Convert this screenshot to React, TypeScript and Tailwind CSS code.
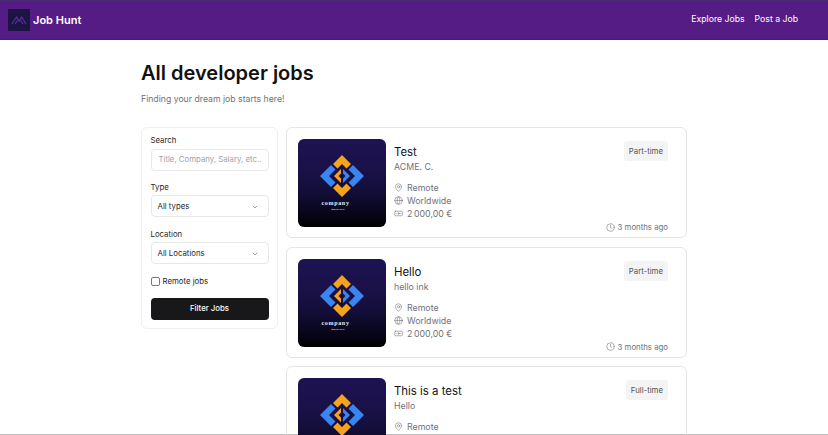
import { ChevronDown, Clock, Globe, MapPin, Banknote } from "lucide-react";

function CompanyLogo() {
  return (
    <div className="relative z-10 w-[88px] h-[88px] shrink-0 rounded-md overflow-hidden bg-[linear-gradient(180deg,#1c1352_0%,#1a1149_35%,#130e38_60%,#0a0720_80%,#000_100%)]">
      <svg viewBox="0 0 88 88" className="w-[88px] h-[88px]">
        <path d="M44 16 L53 25 L48.5 29.5 L44 25 L39.5 29.5 L35 25Z" fill="#f5a31c" />
        <path d="M44 58 L53 49 L48.5 44.5 L44 49 L39.5 44.5 L35 49Z" fill="#f5a31c" />
        <path d="M33 26 L37.5 30.5 L31 37 L37.5 43.5 L33 48 L22 37Z" fill="#3a86f0" />
        <path d="M55 26 L50.5 30.5 L57 37 L50.5 43.5 L55 48 L66 37Z" fill="#3a86f0" />
        <path d="M43 30 L43 34.5 L40.5 37 L43 39.5 L43 44 L36 37Z" fill="#f5a31c" />
        <path d="M45 30 L45 34.5 L47.5 37 L45 39.5 L45 44 L52 37Z" fill="#3a86f0" />
        <text x="37.5" y="66" textAnchor="middle" fontSize="6" fontWeight="700" letterSpacing="0.7" fill="#e8e8ee" fontFamily="'Liberation Serif', serif">company</text>
        <text x="40" y="71" textAnchor="middle" fontSize="2.4" fontWeight="700" fill="#d0d0dc" fontFamily="'Liberation Sans', sans-serif">tagline here</text>
      </svg>
    </div>
  );
}

type Job = { title: string; company: string; type: string };

const jobs: Job[] = [
  { title: "Test", company: "ACME. C.", type: "Part-time" },
  { title: "Hello", company: "hello ink", type: "Part-time" },
  { title: "This is a test", company: "Hello", type: "Full-time" },
];

function JobCard({ job }: { job: Job }) {
  return (
    <div className="h-[111px] shrink-0 rounded-md border border-[#e5e5e5] pl-[11px] pr-[18px] pt-[11px] flex gap-2">
      <CompanyLogo />
      <div className="flex-1 flex flex-col">
        <h2 className="text-[11.4px] leading-[16px] text-[#111] mt-[5px]">{job.title}</h2>
        <p className="text-[8.8px] leading-[12px] text-[#71717a] mt-[1px]">{job.company}</p>
        <div className="mt-[8px] flex flex-col text-[8.8px] leading-[13px] text-[#71717a]">
          <div className="flex items-center gap-[4px]">
            <MapPin size={9} strokeWidth={1.5} />
            <span>Remote</span>
          </div>
          <div className="flex items-center gap-[4px]">
            <Globe size={9} strokeWidth={1.5} />
            <span>Worldwide</span>
          </div>
          <div className="flex items-center gap-[4px]">
            <Banknote size={9} strokeWidth={1.5} />
            <span>{"2\u202f000,00\u00a0€"}</span>
          </div>
        </div>
      </div>
      <div className="flex flex-col items-end justify-between pt-[2px] pb-[4px]">
        <span className="bg-[#f4f4f5] text-[#52525b] text-[7.8px] leading-[20px] rounded-[3px] px-[5px] h-[20px]">{job.type}</span>
        <span className="flex items-center gap-[3px] text-[7.8px] leading-[12px] text-[#71717a]">
          <Clock size={9} strokeWidth={1.5} />3 months ago
        </span>
      </div>
    </div>
  );
}

function Select({ label }: { label: string }) {
  return (
    <div className="h-[22px] rounded border border-[#e8e8e8] pl-[6px] pr-[9px] pt-[1px] flex items-center justify-between text-[#27272a]">
      {label}
      <ChevronDown size={8} className="text-[#71717a]" />
    </div>
  );
}

export default function App() {
  return (
    <div className="h-[435px] overflow-hidden bg-white font-['Inter',sans-serif] shadow-[inset_0_-1px_0_#bdbdbd]">
      <header className="h-[40px] bg-[#561c85] border-t border-[#4a2a73] border-b-[#4b1a78] border-b flex items-center justify-between pl-2 pr-[30px]">
        <div className="flex items-center gap-[3px]">
          <div className="w-[22px] h-[22px] bg-[#1c1544] flex items-center justify-center">
            <svg viewBox="0 0 22 22" className="w-[22px] h-[22px]" fill="none" stroke="#5b2f9c" strokeWidth="1.2">
              <path d="M4 15 L8.5 8 L11 12 L13.5 8 L18 15" />
              <path d="M7 15 L9.5 11.5 M15 15 L12.5 11.5" />
            </svg>
          </div>
          <span className="text-white text-[11px] font-semibold">Job Hunt</span>
        </div>
        <nav className="flex items-center gap-[10px] text-white text-[8.7px]">
          <span>Explore Jobs</span>
          <span>Post a Job</span>
        </nav>
      </header>

      <main className="w-[546px] ml-[141px]">
        <h1 className="text-[20px] leading-[28px] font-semibold text-[#111] mt-[19px]">All developer jobs</h1>
        <p className="text-[8.7px] leading-[14px] text-[#71717a] mt-[5px]">Finding your dream job starts here!</p>

        <div className="flex items-start gap-[8px] mt-[21px]">
          <aside className="w-[137px] shrink-0 rounded-md border border-[#eeeeee] px-[8.5px] pt-[6px] pb-[8px] text-[7.8px] text-[#27272a]">
            <label className="block leading-[12px]">Search</label>
            <div className="mt-[3px] h-[22px] rounded border border-[#e8e8e8] pl-[7px] flex items-center text-[#a1a1aa] whitespace-nowrap">
              Title, Company, Salary, etc..
            </div>
            <label className="block leading-[12px] mt-[10px] mb-[2px]">Type</label>
            <Select label="All types" />
            <label className="block leading-[12px] mt-[11px] mb-[2px]">Location</label>
            <Select label="All Locations" />
            <div className="flex items-center gap-[3px] mt-[12px]">
              <span className="w-[9px] h-[9px] rounded-[2px] border border-[#777]" />
              <span>Remote jobs</span>
            </div>
            <button className="mt-[10px] pt-[1px] w-full h-[22px] bg-[#18181b] rounded text-white font-medium">Filter Jobs</button>
          </aside>
          <div className="flex-1 flex flex-col gap-[8.5px]">
            {jobs.map((job) => (
              <JobCard key={job.title} job={job} />
            ))}
          </div>
        </div>
      </main>
    </div>
  );
}
